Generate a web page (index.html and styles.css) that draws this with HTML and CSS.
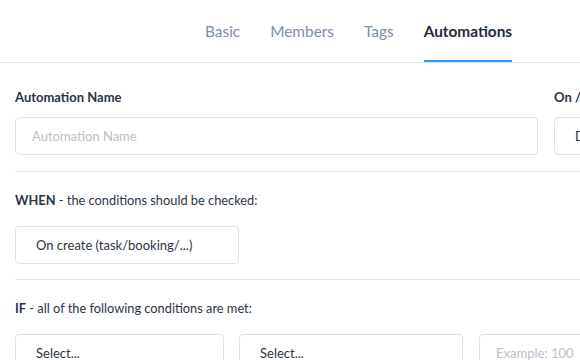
FILE: index.html
```html
<!DOCTYPE html>
<html>
<head>
<meta charset="utf-8">
<link rel="stylesheet" href="styles.css">
</head>
<body>
<div class="page">
  <nav class="tabs">
    <div class="tab-list">
      <span class="tab">Basic</span>
      <span class="tab">Members</span>
      <span class="tab">Tags</span>
      <span class="tab active">Automations</span>
    </div>
  </nav>
  <div class="content">
    <div class="row name-row">
      <div class="field field-name">
        <label class="label">Automation Name</label>
        <div class="input placeholder">Automation Name</div>
      </div>
      <div class="field field-on">
        <label class="label">On / Off</label>
        <div class="input">Disabled</div>
      </div>
    </div>
    <hr class="divider">
    <div class="section">
      <p class="section-title"><b>WHEN</b> - the conditions should be checked:</p>
      <div class="input button-select">On create (task/booking/...)</div>
    </div>
    <hr class="divider">
    <div class="section">
      <p class="section-title"><b>IF</b> - all of the following conditions are met:</p>
      <div class="cond-row">
        <div class="input sel1">Select...</div>
        <div class="input sel2">Select...</div>
        <div class="input sel3 placeholder">Example: 100</div>
      </div>
    </div>
  </div>
</div>
</body>
</html>
```
FILE: styles.css
```css
html, body {
  margin: 0;
  padding: 0;
  overflow: hidden;
  background: #ffffff;
}
body {
  font-family: "Lato", "Open Sans", sans-serif;
  color: #2b3546;
}
.page {
  width: 900px;
}
.tabs {
  height: 62px;
  border-bottom: 1px solid #e1e5ea;
  display: flex;
}
.tab-list {
  display: flex;
  gap: 30px;
  padding-left: 205px;
  height: 100%;
}
.tab {
  font-size: 15.4px;
  color: #7f8ea3;
  display: flex;
  align-items: center;
  box-sizing: border-box;
  height: 100%;
  padding-top: 2px;
  border-bottom: 2px solid transparent;
  margin-bottom: -1px;
}
.tab.active {
  color: #1f2a3a;
  font-weight: 700;
  border-bottom-color: #2e9cf3;
}
.content {
  padding: 0 15px;
}
.name-row {
  display: flex;
  gap: 16px;
  padding-top: 26px;
  padding-bottom: 16px;
}
.label {
  display: block;
  font-size: 13px;
  font-weight: 700;
  color: #2b3546;
  height: 16px;
  margin-bottom: 12px;
}
.field-name { width: 523px; }
.field-on { width: 200px; }
.input {
  box-sizing: border-box;
  height: 38px;
  border: 1px solid #dde2e8;
  border-radius: 4px;
  display: flex;
  align-items: center;
  padding-left: 16px;
  font-size: 13px;
  color: #2b3546;
  background: #fff;
}
.input.placeholder { color: #b8bfca; }
.field-on .input { padding-left: 20px; }
.divider {
  border: none;
  border-top: 1px solid #e1e5ea;
  margin: 0;
}
.section {
  padding-top: 20px;
  padding-bottom: 15px;
}
.section-title {
  margin: 0 0 17px 0;
  font-size: 12.8px;
  color: #2b3546;
  height: 17px;
}
.section-title b { font-weight: 700; }
.button-select {
  width: 224px;
  padding-left: 20px;
}
.cond-row {
  display: flex;
}
.sel1 { width: 209px; margin-right: 15px; padding-left: 20px; }
.sel2 { width: 224px; margin-right: 16px; padding-left: 20px; }
.sel3 { width: 224px; padding-left: 16px; }
```
